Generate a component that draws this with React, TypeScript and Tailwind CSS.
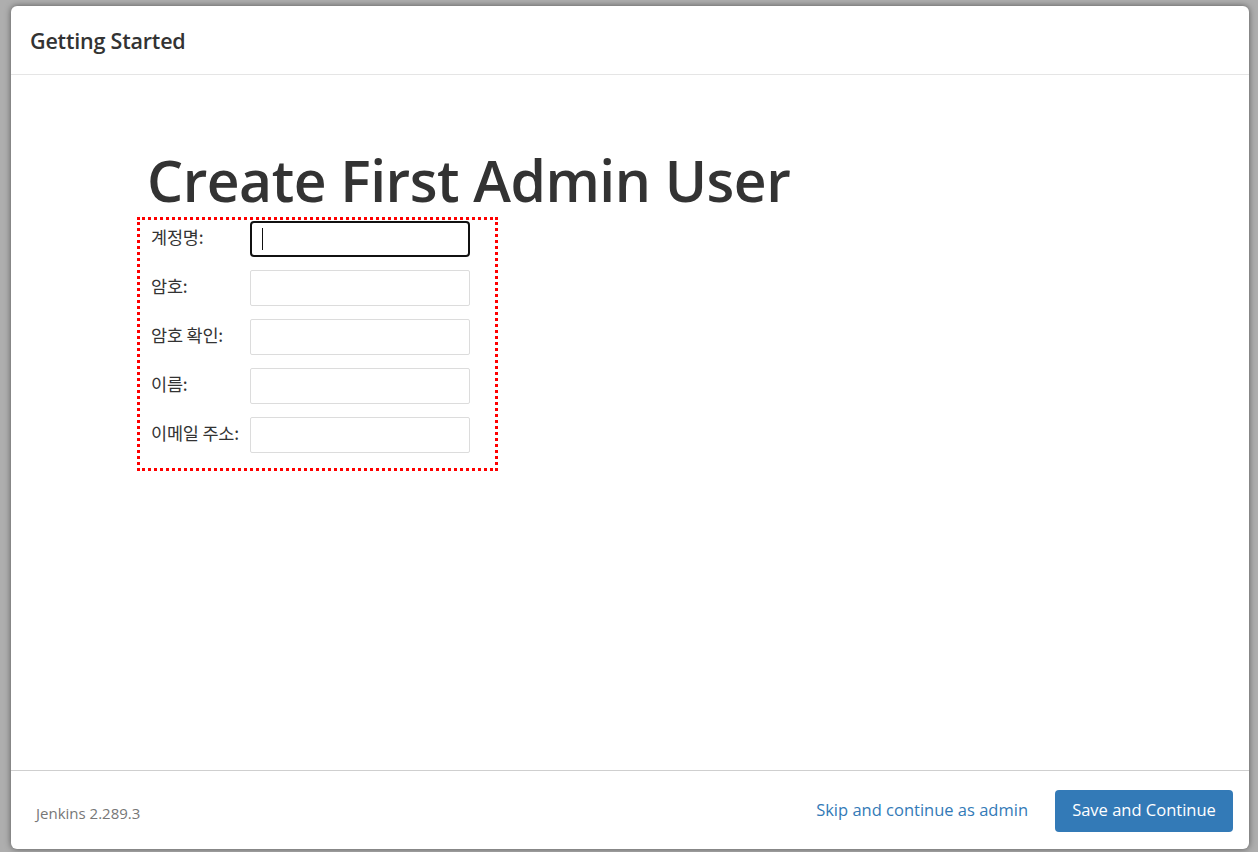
import React from "react";

const font = { fontFamily: '"Open Sans", "Noto Sans CJK KR", sans-serif' };

const rows = ["계정명:", "암호:", "암호 확인:", "이름:", "이메일 주소:"];

export default function App() {
  return (
    <div className="w-[1258px] h-[852px] bg-[#aeaeae] flex pl-[11px] pr-[9px] pt-[6px] pb-[3px]" style={font}>
      <div className="flex-1 bg-white rounded-[6px] shadow-[0_0_6px_rgba(0,0,0,0.5)] flex flex-col overflow-hidden">
        <div className="h-[69px] border-b border-[#e5e5e5] flex items-center px-[19px]">
          <h4 className="text-[21.5px] font-semibold text-[#333] tracking-[-0.2px] mt-[3px]">Getting Started</h4>
        </div>
        <div className="flex-1 pl-[126px] pt-[74px]">
          <h1 className="ml-[10px] text-[57px] leading-[63px] font-semibold text-[#333] tracking-[-0.5px]">Create First Admin User</h1>
          <div className="mt-[5px] w-[361px] border-[3px] border-dotted border-[#ff0000] pl-[11px] pt-[1px] pb-[15px]">
            <div className="flex flex-col gap-[13px]">
              {rows.map((r, i) => (
                <div key={r} className="flex items-center h-[36px]">
                  <span className="w-[99px] text-[17.5px] tracking-[-0.2px] text-[#333] whitespace-nowrap -mt-[3px]" style={{ fontFamily: '"Noto Sans CJK KR", sans-serif' }}>{r}</span>
                  {i === 0 ? (
                    <div className="w-[220px] h-[36px] border-2 border-[#111] rounded-[4px] flex items-center pl-[10px]">
                      <div className="w-[1px] h-[22px] bg-[#111]" />
                    </div>
                  ) : (
                    <div className="w-[220px] h-[36px] border border-[#dcdcdc] rounded-[2px]" />
                  )}
                </div>
              ))}
            </div>
          </div>
        </div>
        <div className="h-[79px] border-t border-[#cfcfcf] flex items-center px-[25px]">
          <span className="text-[15px] text-[#777] mt-[6px]">Jenkins 2.289.3</span>
          <div className="flex-1" />
          <a className="text-[16.5px] text-[#337ab7] mr-[27px] mt-[1px]">Skip and continue as admin</a>
          <button className="h-[42px] w-[178px] bg-[#337ab7] text-white text-[16.5px] rounded-[4px] mr-[-9px] mt-[1px]">Save and Continue</button>
        </div>
      </div>
    </div>
  );
}
